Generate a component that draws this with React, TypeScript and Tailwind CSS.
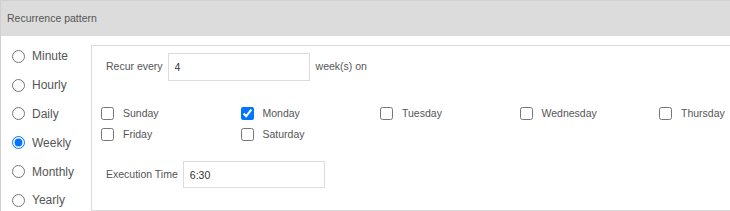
import React from "react";

const radios = ["Minute", "Hourly", "Daily", "Weekly", "Monthly", "Yearly"];
const days = [
  ["Sunday", "Monday", "Tuesday", "Wednesday", "Thursday"],
  ["Friday", "Saturday"],
];

export default function App() {
  return (
    <div
      className="w-[730px] h-[211px] overflow-hidden bg-white border-l border-t border-[#d0d0d0] text-[#555]"
      style={{ fontFamily: '"Liberation Sans", Arial, sans-serif' }}
    >
      <div className="h-[35px] bg-[#dcdcdc] flex items-center pl-[6px] text-[10.5px] text-[#555]">
        Recurrence pattern
      </div>
      <div className="flex">
        <div className="w-[90px] shrink-0 pt-[6px] flex flex-col">
          {radios.map((r) => (
            <label key={r} className="h-[28.8px] flex items-center pl-[11px] text-[12px] text-[#555] whitespace-nowrap">
              <input
                type="radio"
                name="pattern"
                defaultChecked={r === "Weekly"}
                className="m-0 w-[13px] h-[13px]"
              />
              <span className="ml-[7px]">{r}</span>
            </label>
          ))}
        </div>
        <div className="flex-1 min-w-0 overflow-hidden mt-[9px] h-[166px] border-l border-t border-b border-[#dcdcdc] flex flex-col text-[10.5px]">
          <div className="flex items-center pl-[14px] pt-[7px]">
            <span>Recur every</span>
            <input
              type="text"
              defaultValue="4"
              className="ml-[5px] w-[142px] h-[28px] border border-[#dcdcdc] px-[6px] text-[10.5px] text-[#333] outline-none"
            />
            <span className="ml-[6px]">week(s) on</span>
          </div>
          <div className="mt-[22px] pl-[9px] flex flex-col">
            {days.map((row, i) => (
              <div key={i} className="flex h-[21px] items-center">
                {row.map((d) => (
                  <label key={d} className="w-[139.5px] flex items-center shrink-0 whitespace-nowrap">
                    <input
                      type="checkbox"
                      defaultChecked={d === "Monday"}
                      className="m-0 w-[13px] h-[13px]"
                    />
                    <span className="ml-[9px]">{d}</span>
                  </label>
                ))}
              </div>
            ))}
          </div>
          <div className="mt-[16px] flex items-center pl-[14px]">
            <span>Execution Time</span>
            <input
              type="text"
              defaultValue="6:30"
              className="ml-[5px] w-[142px] h-[27px] border border-[#dcdcdc] px-[6px] text-[10.5px] text-[#333] outline-none"
            />
          </div>
        </div>
      </div>
    </div>
  );
}
